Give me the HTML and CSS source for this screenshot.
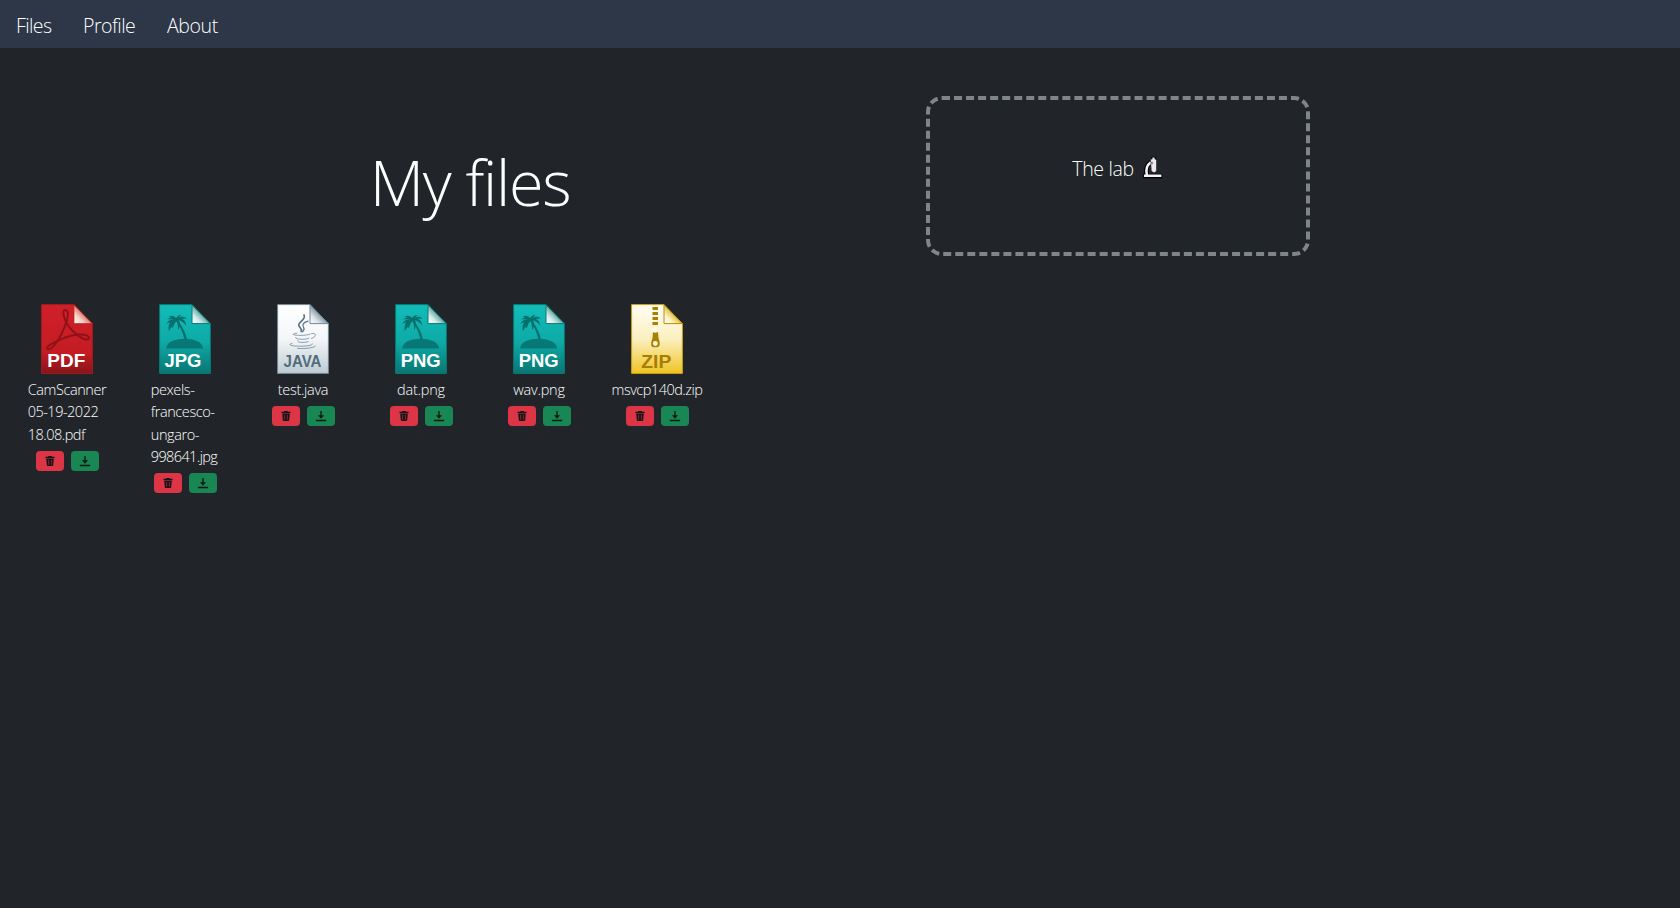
FILE: index.html
```
<!DOCTYPE html>
<html lang="en">
<head>
<meta charset="utf-8">
<title>My files</title>
<link rel="stylesheet" href="styles.css">
</head>
<body>
<svg class="defs" aria-hidden="true">
  <defs>
    <linearGradient id="red" x1="0" y1="0" x2="0" y2="1"><stop offset="0" stop-color="#d0202a"/><stop offset=".7" stop-color="#c41c22"/><stop offset="1" stop-color="#86151b"/></linearGradient>
    <linearGradient id="teal" x1="0" y1="0" x2="0" y2="1"><stop offset="0" stop-color="#12bcb9"/><stop offset=".55" stop-color="#0eaaa6"/><stop offset="1" stop-color="#087673"/></linearGradient>
    <linearGradient id="silver" x1="0" y1="0" x2="0" y2="1"><stop offset="0" stop-color="#fff"/><stop offset=".5" stop-color="#f3f6f8"/><stop offset="1" stop-color="#bdcbd3"/></linearGradient>
    <linearGradient id="gold" x1="0" y1="0" x2="0" y2="1"><stop offset="0" stop-color="#fffdf4"/><stop offset=".5" stop-color="#fbf0bf"/><stop offset="1" stop-color="#efc423"/></linearGradient>
    <linearGradient id="fold-red" x1="0" y1="1" x2=".65" y2=".35"><stop offset="0" stop-color="#fff"/><stop offset=".45" stop-color="#f6cfc4"/><stop offset="1" stop-color="#c4453a"/></linearGradient>
    <linearGradient id="fold-teal" x1="0" y1="1" x2=".65" y2=".35"><stop offset="0" stop-color="#fff"/><stop offset=".4" stop-color="#d4eceb"/><stop offset="1" stop-color="#2c817d"/></linearGradient>
    <linearGradient id="fold-silver" x1="0" y1="1" x2=".65" y2=".35"><stop offset="0" stop-color="#fff"/><stop offset=".4" stop-color="#dce3e8"/><stop offset="1" stop-color="#5f7583"/></linearGradient>
    <linearGradient id="fold-gold" x1="0" y1="1" x2=".65" y2=".35"><stop offset="0" stop-color="#fff"/><stop offset=".4" stop-color="#fcf3c9"/><stop offset="1" stop-color="#d5a600"/></linearGradient>
    <path id="page" d="M.6.6H33L51.4 19.6V69.4H.6z"/>
    <path id="fold" d="M33 .9V19.6H51.2z"/>
    <g id="palm" fill="#06706f">
      <path d="M7 44.5C8 38 15 34.8 25 34.7 36 34.7 43.5 38 44 44.5z" fill-opacity=".85"/>
      <path d="M17.5 15.2C22 20 26 27 28 35.2L25.6 36C24 28 20.5 21 16.3 16z"/>
      <path d="M17.6 16.4C13 14 9 16.5 7.2 20.2 9 18.5 10.5 18.5 11 18.4 9.5 20.5 9.2 23 9.8 27.2 11 24.8 12.5 23.5 13 22.8L13.8 24.5C14.5 21 16 18.5 17.6 16.4 18.5 17.4 19 21.5 19.2 26 21.5 22.5 21.5 18.6 19.8 16.5 22 16.5 25 18.5 27 21.5 27 18.2 25.5 15.8 22.5 14.8L27.5 14.4C25.5 12.5 22 12.3 19.4 14.1L22.5 10.9C19.8 11 17.8 12.5 17 14.2 16 11.8 12.5 11 9.4 12.5L12 13 8 15.6C11 15 14.5 14.8 17.6 16.4z"/>
    </g>
    <symbol id="trash" viewBox="0 0 12 12">
      <path d="M4.4.9H7.6L8.1 1.7H10.5V3.2H1.5V1.7H3.9zM2.2 3.8H9.8L9.2 10.1Q9.1 11 8.2 11H3.8Q2.9 11 2.8 10.1z" fill="#15161a"/>
      <path d="M4.6 5V9.8M7.4 5V9.8" stroke="#a92c39" stroke-width=".75"/>
    </symbol>
    <symbol id="download" viewBox="0 0 12 12">
      <path d="M6 1V7M.9 10.5H11.1" fill="none" stroke="#101713" stroke-width="1.3"/>
      <path d="M3 5.3H9L6 8.7z" fill="#101713"/>
    </symbol>
  </defs>
</svg>
<nav class="navbar">
  <a class="nav-link files">Files</a>
  <a class="nav-link profile">Profile</a>
  <a class="nav-link about">About</a>
</nav>
<main class="content">
  <section class="header-row">
    <h1 class="title">My files</h1>
    <div class="lab">
      <span class="lab-text">The lab</span>
      <svg class="microscope" viewBox="0 0 22 24">
        <g fill="none" stroke="#000" stroke-width="4.4" stroke-linejoin="round"><path d="M1.2 20H20.2M4.8 19C3.6 13.5 4.4 9 8.5 6M11.6 .8V16"/></g>
        <path d="M8.8 3.6 10.4 3.2V1.6L12.6 1.4V3L14.2 4V15L12.3 16.6 9.6 15.2z" fill="#eee7eb"/>
        <path d="M2 19.8H19.4M4.9 19C3.7 14 4.5 9.4 8.8 6.4" fill="none" stroke="#f5f3f5" stroke-width="2.5"/>
        <circle cx="9.6" cy="7" r="1.5" fill="#8d888f"/>
      </svg>
    </div>
  </section>
  <section class="file-grid">
    <article class="file">
      <svg class="file-icon" viewBox="0 0 52 70"><use href="#page" fill="url(#red)" stroke="#a51b20"/><use href="#fold" fill="url(#fold-red)" stroke="#b52424" stroke-width=".7"/>
        <path d="M6.3 44.8C4.5 42.4 13 38.5 19.5 35.5 26 32.2 36 29.6 43 30.8 51.5 32.4 48 37 42.3 34.7 34.5 31.5 26 22 23.6 14.5 20.8 6 23.7 4.3 26.2 7.2 28.6 10 24.5 22 20.3 30.2 16.5 37.8 10 47.5 6.3 44.8z" fill="none" stroke="#8e1118" stroke-width="1.9"/>
        <text class="badge white" x="25.3" y="63" textLength="38" lengthAdjust="spacingAndGlyphs">PDF</text></svg>
      <p class="name"><span class="n-cam">CamScanner</span><br><span class="n-date">05-19-2022</span><br><span class="n-pdf">18.08.pdf</span></p>
      <div class="actions"><button class="btn danger"><svg><use href="#trash"/></svg></button><button class="btn success"><svg><use href="#download"/></svg></button></div>
    </article>
    <article class="file">
      <svg class="file-icon" viewBox="0 0 52 70"><use href="#page" fill="url(#teal)" stroke="#087a76"/><use href="#fold" fill="url(#fold-teal)" stroke="#087a76"/><use href="#palm"/>
        <text class="badge white" x="24" y="63" textLength="37" lengthAdjust="spacingAndGlyphs">JPG</text></svg>
      <p class="name n-pexels"><span>pexels-</span><br><span>francesco-</span><br><span>ungaro-</span><br><span class="n-jpg">998641.jpg</span></p>
      <div class="actions"><button class="btn danger"><svg><use href="#trash"/></svg></button><button class="btn success"><svg><use href="#download"/></svg></button></div>
    </article>
    <article class="file">
      <svg class="file-icon" viewBox="0 0 52 70"><use href="#page" fill="url(#silver)" stroke="#718996"/><use href="#fold" fill="url(#fold-silver)" stroke="#718996"/>
        <g fill="none" stroke="#5a7687" stroke-linecap="round"><path d="M27 11C29.5 15.5 21.5 17.5 21.7 21 21.8 23.4 25.5 24.5 24.2 27.5" stroke-width="1.7"/><path d="M31 17.2C27 18.3 24.7 20.5 26.4 23 27.6 25 27 26.5 25.4 27.7" stroke-width="1.3"/><path d="M20 29.2C13 30 16.3 31.4 23 31.4 28 31.4 31 30.8 33 30.2M18.5 33.6C18.5 35.8 28 35.8 32 34.2M20.5 36.8C20.5 38.8 27 38.9 31.2 37.6M34.5 29.6C40 28.2 39.3 33.5 34.5 34.5M15 39.4C9 41 16 42.4 25 42.2 31 42 36.5 41.2 35.5 39.8M20.5 44.4C28 45 37 44 38.4 42" stroke-width=".85" stroke-opacity=".8"/></g>
        <text class="badge java" x="25.5" y="62.8" textLength="38" lengthAdjust="spacingAndGlyphs">JAVA</text></svg>
      <p class="name n-java">test.java</p>
      <div class="actions"><button class="btn danger"><svg><use href="#trash"/></svg></button><button class="btn success"><svg><use href="#download"/></svg></button></div>
    </article>
    <article class="file">
      <svg class="file-icon" viewBox="0 0 52 70"><use href="#page" fill="url(#teal)" stroke="#087a76"/><use href="#fold" fill="url(#fold-teal)" stroke="#087a76"/><use href="#palm"/>
        <text class="badge white" x="25.7" y="63" textLength="40" lengthAdjust="spacingAndGlyphs">PNG</text></svg>
      <p class="name n-png">dat.png</p>
      <div class="actions"><button class="btn danger"><svg><use href="#trash"/></svg></button><button class="btn success"><svg><use href="#download"/></svg></button></div>
    </article>
    <article class="file">
      <svg class="file-icon" viewBox="0 0 52 70"><use href="#page" fill="url(#teal)" stroke="#087a76"/><use href="#fold" fill="url(#fold-teal)" stroke="#087a76"/><use href="#palm"/>
        <text class="badge white" x="25.7" y="63" textLength="40" lengthAdjust="spacingAndGlyphs">PNG</text></svg>
      <p class="name n-png">wav.png</p>
      <div class="actions"><button class="btn danger"><svg><use href="#trash"/></svg></button><button class="btn success"><svg><use href="#download"/></svg></button></div>
    </article>
    <article class="file">
      <svg class="file-icon" viewBox="0 0 52 70"><use href="#page" fill="url(#gold)" stroke="#c9a313"/><use href="#fold" fill="url(#fold-gold)" stroke="#b78e05"/>
        <path d="M21.5 3H27V6H21.5zM21.5 8H27V11H21.5zM21.5 13H27V16H21.5zM21.5 18H27V21H21.5zM22 28H27L27.5 34C30.2 42 28.4 43.2 24.3 43.2 20.2 43.2 18.8 42 21.5 34z" fill="#a98006"/>
        <circle cx="24.3" cy="25.8" r="3" fill="#fffbe9"/><circle cx="24.3" cy="39.5" r="2.4" fill="#fff8dc"/>
        <text class="badge zip" x="25.3" y="63.5" textLength="30" lengthAdjust="spacingAndGlyphs">ZIP</text></svg>
      <p class="name">msvcp140d.zip</p>
      <div class="actions"><button class="btn danger"><svg><use href="#trash"/></svg></button><button class="btn success"><svg><use href="#download"/></svg></button></div>
    </article>
  </section>
</main>
</body>
</html>
```
FILE: styles.css
```
* { box-sizing: border-box; }
body { margin: 0; min-height: 100vh; background: #212529; color: #fff; font-family: "Open Sans", "Noto Sans", sans-serif; font-weight: 300; }
.defs { display: block; width: 0; height: 0; }
.navbar { display: flex; height: 48px; gap: 32px; padding: 10px 16px; background: #2d3748; }
.nav-link { font-size: 19.5px; line-height: 31px; white-space: nowrap; letter-spacing: -.5px; }
.files { width: 35px; letter-spacing: -.6px; }
.profile { width: 52px; }
.about { letter-spacing: -.4px; }
.header-row { display: grid; grid-template-columns: 926px 384px; padding-top: 48px; height: 256px; }
.title { margin: 38px 0 0; padding-left: 14px; text-align: center; font-size: 63px; line-height: 96px; font-weight: 300; letter-spacing: -1.3px; }
.lab { display: flex; align-items: center; justify-content: center; gap: 8px; height: 160px; padding-bottom: 16px; border: 4px dashed #808588; border-radius: 16px; }
.lab-text { font-size: 19.5px; letter-spacing: -.35px; white-space: nowrap; }
.microscope { width: 22px; height: 24px; }
.file-grid { display: grid; grid-template-columns: repeat(6, 118px); padding-left: 8px; }
.file { display: flex; flex-direction: column; align-items: center; }
.file-icon { display: block; width: 52px; height: 70px; }
.name { margin: 4.5px 0; font-size: 14.5px; line-height: 22.5px; letter-spacing: -.5px; white-space: nowrap; font-weight: 340; }
.n-cam { letter-spacing: -.4px; }
.n-pexels { letter-spacing: -.4px; margin-right: 2px; }
.n-jpg { letter-spacing: -.6px; }
.n-java { letter-spacing: -.3px; }
.n-png { letter-spacing: -.2px; }
.actions { display: flex; gap: 7px; }
.btn { display: flex; align-items: center; justify-content: center; width: 28px; height: 20px; padding: 0; border: 0; border-radius: 4px; }
.btn svg { width: 12px; height: 12px; }
.danger { background: #dc3545; }
.success { background: #198754; }
.badge { font-family: "Liberation Sans", Arial, sans-serif; font-weight: 700; font-size: 19px; text-anchor: middle; }
.white { fill: #fff; }
.java { fill: #526c7a; font-size: 16.5px; }
.zip { fill: #a67d05; }
```
